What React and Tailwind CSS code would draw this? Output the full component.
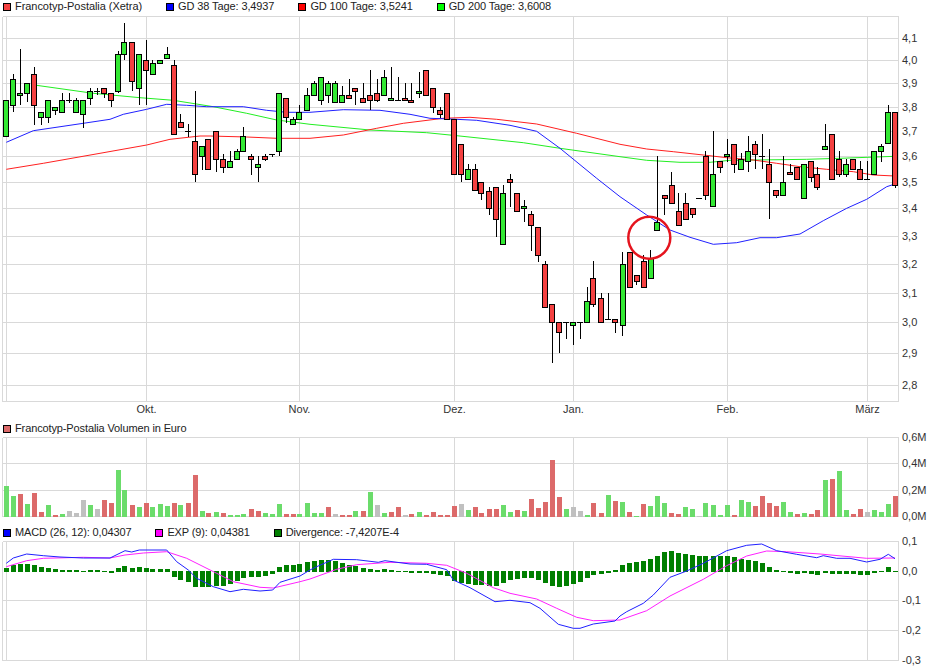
const G = "g", R = "r";
// candle readings: centre x, wick top, wick bottom, body top, body bottom, colour
const segA = [
  [19,301,409,301,409,G],[40,223,337,238,316,G],[61,148,315,280,286,G],[82,250,305,250,280,G],[103,202,374,223,316,R],
  [124,337,374,337,352,G],[145,301,368,301,352,G],[166,322,345,322,331,G],[187,280,337,301,337,G],[208,280,308,301,301,G],
  [229,295,337,301,337,G],[250,301,383,301,343,G],[271,265,316,274,295,G],[292,265,286,274,274,G],[313,265,295,265,280,R],
  [334,280,322,280,301,R],[355,154,280,163,274,G],[373,70,181,127,163,G],[397,127,274,127,244,R],[418,163,316,163,265,G],
  [439,121,316,181,211,R],[458,181,223,190,223,G],[481,181,190,181,190,G],[502,142,175,163,175,G],[523,181,403,196,403,R],
  [542,343,383,367,382,R],[565,373,412,394,394,G],[586,274,547,424,523,R],[607,439,510,439,469,G],[625,418,508,418,508,R],
  [649,394,517,394,478,R],[670,461,518,478,502,R],[691,453,502,484,502,G],[712,447,478,454,478,G],[730,382,454,409,454,G],
  [754,463,524,469,478,R],[775,469,547,493,502,G],[796,463,484,469,478,R],[817,463,470,463,463,G],[838,280,469,280,454,G],
  [859,295,368,295,352,R],[880,352,373,358,373,G],[898,316,358,337,358,G],[922,265,331,286,331,G],
];
const segB = [
  [13,244,286,250,286,G],[34,232,316,232,301,G],[55,244,310,250,286,G],[76,244,307,250,307,G],[97,259,307,286,307,G],
  [118,238,295,286,295,R],[136,265,316,265,274,R],[160,250,307,295,307,R],[181,211,331,286,301,R],[202,238,307,280,301,R],
  [223,211,286,232,286,G],[244,202,301,295,301,G],[265,232,301,301,301,G],[286,250,301,295,301,R],[304,250,307,301,307,R],
  [328,217,295,274,280,G],[349,211,286,211,286,R],[370,265,338,265,322,R],[391,322,355,331,343,R],[412,280,358,280,358,R],
  [433,358,523,358,523,R],[454,433,547,433,523,R],[475,492,538,508,538,G],[496,492,571,508,571,R],[514,547,601,547,580,R],
  [538,562,645,572,625,R],[559,562,710,562,658,R],[580,555,733,580,733,G],[601,522,620,538,547,R],[622,580,634,580,634,R],
  [643,601,667,619,625,G],[664,634,752,643,676,R],[685,682,785,682,766,R],[706,784,922,793,922,R],[727,913,1090,913,967,R],
  [748,967,1060,967,997,R],[769,967,1016,967,967,G],[790,967,1034,967,976,G],[811,967,1016,967,967,G],[832,862,967,904,967,G],
  [850,784,922,835,913,R],[874,880,967,895,967,R],[895,880,958,958,958,G],[916,958,998,958,967,R],
];
const segC = [
  [8,367,617,403,586,G],[29,367,472,367,472,R],[50,436,465,436,454,R],[71,375,472,394,472,R],[92,361,445,385,445,G],
  [112,78,301,277,301,G],[134,196,256,196,205,R],[155,127,220,166,220,R],[176,190,286,244,286,R],[197,190,268,220,268,R],
  [218,235,265,235,253,R],[238,205,205,205,205,G],[257,64,211,79,196,R],[280,4,229,133,229,G],[301,94,128,94,112,R],
  [322,27,95,73,79,G],[343,43,128,43,103,R],[364,70,118,88,118,G],[385,18,127,64,94,G],[406,33,118,43,73,R],
  [427,13,118,79,79,G],[448,58,268,103,157,R],[469,181,205,181,196,R],[490,79,196,157,196,G],[511,103,133,127,133,R],
  [532,112,148,112,148,R],[553,103,205,103,205,G],[574,94,157,94,142,R],[592,112,181,133,172,R],[616,-17,58,49,58,G],
  [637,13,148,13,148,R],[658,64,142,88,133,R],[679,88,142,103,133,G],[700,88,118,88,118,R],[721,94,148,118,148,R],
  [742,94,148,148,148,G],[763,64,133,64,133,G],[784,43,95,49,64,G],[805,-74,40,-54,40,G],[826,-54,173,-54,165,R],
];
const conv = (s, ox, oy) => s.map(([x, a, b, c, d, k]) => ({ x: ox + x / 3, wt: oy + a / 3, wb: oy + b / 3, bt: oy + c / 3, bb: oy + d / 3, k }));
const candles = [...conv(segA, 0, 0), ...conv(segB, 310, 0), ...conv(segC, 620, 130)];

const volTops = [198,228,222,252,219,276,255,285,282,273,279,240,255,267,240,249,150,210,255,261,249,261,252,258,249,255,249,165,273,279,276,279,285,285,282,267,273,279,282,252,282,282,282,249,
  279,279,261,282,285,285,273,273,216,255,279,276,261,285,282,276,285,276,285,285,258,252,270,261,279,267,267,255,276,270,273,237,264,246,120,231,267,261,273,285,249,279,225,243,
  246,276,288,252,258,228,249,279,282,261,267,289,249,255,285,255,285,240,246,258,228,249,258,246,276,282,279,282,270,180,177,153,270,282,267,276,270,276,252,228];
const volColors =
  "ggrgrrgrgsssgsrrggrgrgggrgrrgrgrgggrrgggrrgg" +
  "ggrsrrgrgsgrrsrgrrrrrsgrrrrggrgrrrrrgssgrrgr" +
  "grgrgggrrggsggggrggrrrrggrgrrgrggrrsgggr";
const tones = { g: "#6bdc6b", r: "#dc6a6a", s: "#c0c0c0" };

const macdBars = [[144,156],[135,156],[132,156],[132,156],[135,156],[141,156],[144,156],[147,156],[150,156],[150,156],[150,156],[153,156],[150,156],[150,156],[153,156],[153,159],[144,156],[138,156],[144,156],[141,156],[144,156],[147,156],[147,156],[147,156],[153,171],[153,180],[153,186],[153,201],[153,201],[153,201],[153,198],[153,198],[153,192],[153,183],[153,174],[153,171],[153,171],[153,168],[153,162],[141,156],[135,156],[135,156],[132,156],[126,156],
  [123,156],[120,156],[120,156],[123,156],[129,156],[135,156],[138,156],[144,156],[147,156],[150,156],[147,156],[150,156],[153,156],[153,156],[153,159],[153,159],[153,159],[153,162],[153,165],[153,168],[153,183],[153,189],[153,192],[153,195],[153,195],[153,198],[153,198],[153,189],[153,180],[153,177],[153,174],[153,174],[153,180],[153,189],[153,198],[153,201],[153,198],[153,192],[153,186],[153,174],[153,165],[153,162],[153,159],[150,156],
  [135,156],[129,156],[126,156],[123,156],[117,156],[108,156],[96,156],[93,156],[99,156],[102,156],[105,156],[108,156],[108,156],[108,156],[108,156],[108,156],[111,156],[117,156],[120,156],[123,156],[129,156],[141,156],[150,156],[153,157],[153,159],[153,162],[153,159],[153,162],[153,165],[153,159],[153,162],[153,162],[153,162],[153,162],[153,165],[153,165],[153,159],[153,156],[141,156],[153,156]];

const line = (parts) => parts.flatMap(([ox, oy, p]) => p.map(([x, y]) => `${(ox + x / 3).toFixed(1)},${(oy + y / 3).toFixed(1)}`)).join(" ");

const blue = line([
  [0,0,[[19,427],[100,392],[250,370],[330,358],[370,343],[440,328],[500,313],[560,316],[620,320],[730,320],[800,331],[860,337]]],
  [310,0,[[0,337],[100,329],[210,331],[300,343],[360,355],[420,357],[500,361],[600,376],[680,394],[750,445],[860,535],[930,590]]],
  [620,130,[[80,255],[150,300],[210,322],[280,343],[350,338],[420,323],[470,323],[540,312],[610,272],[680,235],[740,208],[800,170],[825,162]]],
]);
const red = line([
  [0,0,[[19,508],[130,490],[300,460],[440,435],[510,418],[600,408],[630,408],[740,411],[830,415]]],
  [310,0,[[0,415],[100,405],[200,385],[280,370],[400,355],[480,352],[560,358],[680,372],[800,400],[930,433]]],
  [620,0,[[80,447],[160,455],[250,465],[320,473],[400,480],[470,490],[540,500],[620,508],[700,515],[760,525],[825,528]]],
]);
const green = line([
  [0,0,[[103,255],[280,280],[420,293],[520,301],[640,320],[740,340],[830,360]]],
  [310,0,[[0,373],[180,390],[350,398],[440,407],[640,428],[750,445],[930,470]]],
  [620,0,[[80,481],[180,487],[270,487],[330,481],[480,479],[560,478],[660,475],[825,469]]],
]);
const macdBlue = line([
  [0,520,[[19,130],[40,114],[80,102],[130,107],[180,111],[250,114],[330,114],[375,92],[395,96],[418,90],[500,90],[530,125],[565,150],[590,175],[640,200],[690,215],[730,208],[780,213],[818,210],[840,187],[900,168]]],
  [310,520,[[0,150],[20,140],[70,118],[140,119],[205,127],[225,122],[300,132],[350,133],[410,149],[430,180],[480,203],[555,245],[600,241],[660,248],[690,265],[745,313],[790,325],[810,325],[850,312],[915,303]]],
  [620,520,[[0,288],[20,275],[70,250],[100,225],[150,172],[200,153],[250,130],[320,92],[380,76],[425,72],[470,92],[530,103],[590,113],[610,107],[650,115],[690,115],[740,126],[780,118],[805,103],[825,116]]],
]);
const macdPink = line([
  [0,520,[[19,140],[80,122],[130,115],[250,112],[330,114],[375,105],[430,99],[500,95],[560,115],[650,160],[700,185],[780,202],[820,204],[900,185]]],
  [310,520,[[0,177],[80,148],[140,134],[240,127],[350,130],[410,136],[470,160],[550,203],[600,220],[680,237],[740,265],[800,292],[850,302]]],
  [620,520,[[0,300],[80,272],[150,228],[250,178],[320,137],[380,108],[440,93],[500,95],[600,102],[740,115],[825,114]]],
]);

const vGrid = [6.5, 146.5, 299.5, 454.5, 573.5, 727.5, 867.5];
const grid = "#d9d9d9";

function Frame({ top, bottom, rows }) {
  return (
    <g stroke={grid} strokeWidth="1" shapeRendering="crispEdges">
      {rows.map((y) => <line key={y} x1="2.5" x2="898.5" y1={y} y2={y} />)}
      {[2.5, ...vGrid, 898.5].map((x) => <line key={x} x1={x} x2={x} y1={top} y2={bottom} />)}
    </g>
  );
}

function Labels({ items }) {
  return items.map(([t, y]) => (
    <text key={t} x="902" y={y} dominantBaseline="central" fontSize="11" fill="#333333">{t}</text>
  ));
}

function Legend({ items, className }) {
  return (
    <div className={`flex items-center gap-[24px] pl-[3px] text-[11px] text-[#222222] ${className}`}>
      {items.map(([t, c, track]) => (
        <div key={t} className="flex items-center gap-[4px] whitespace-nowrap">
          <span className="block w-[8px] h-[8px] border border-black" style={{ backgroundColor: c }} />
          <span className={track}>{t}</span>
        </div>
      ))}
    </div>
  );
}

function Candle({ c }) {
  const cx = Math.round(c.x - 0.5) + 0.5;
  const left = Math.round(c.x - 3) + 0.5;
  const fill = c.k === "g" ? "#33e833" : "#f44141";
  const doji = c.bb - c.bt < 1;
  const bt = Math.round(c.bt) + 0.5, bb = Math.round(c.bb) + 0.5;
  return (
    <g shapeRendering="crispEdges">
      <line x1={cx} x2={cx} y1={c.wt} y2={c.wb} stroke="#000" strokeWidth="1" />
      {doji
        ? <line x1={left - 0.5} x2={left + 5.5} y1={bt} y2={bt} stroke="#000" strokeWidth="1" />
        : <rect x={left} y={bt} width="5" height={bb - bt} fill={fill} stroke="#000" strokeWidth="1" />}
    </g>
  );
}

export default function App() {
  return (
    <div className="w-[940px] h-[670px] bg-white overflow-hidden font-['Liberation_Sans',Arial,sans-serif]">
      <section>
        <Legend className="h-[13px]" items={[
          ["Francotyp-Postalia (Xetra)", "#f44141", "tracking-[-0.05px]"],
          ["GD 38 Tage: 3,4937", "#0000ff", "tracking-[-0.11px]"],
          ["GD 100 Tage: 3,5241", "#ff0000", "tracking-[-0.11px]"],
          ["GD 200 Tage: 3,6008", "#00ff00", "tracking-[-0.11px]"],
        ]} />
        <svg className="block w-[940px] h-[408px] overflow-visible" viewBox="0 13 940 408">
          <Frame top={16.5} bottom={401.5} rows={[16.5, 38.5, 60.5, 83.5, 107.5, 131.5, 156.5, 182.5, 208.5, 236.5, 264.5, 293.5, 322.5, 353.5, 385.5, 401.5]} />
          <polyline points={green} fill="none" stroke="#22ee22" strokeWidth="1" />
          <polyline points={red} fill="none" stroke="#ff2020" strokeWidth="1" />
          <polyline points={blue} fill="none" stroke="#2020ff" strokeWidth="1" />
          {candles.map((c, i) => <Candle key={i} c={c} />)}
          <circle cx="649.3" cy="237.7" r="21" fill="none" stroke="#e5141e" strokeWidth="2.5" />
          <Labels items={[["4,1",38],["4,0",60],["3,9",83],["3,8",107],["3,7",131],["3,6",156],["3,5",182],["3,4",208],["3,3",236],["3,2",264],["3,1",293],["3,0",322],["2,9",353],["2,8",385]]} />
          {[["Okt.",146.5],["Nov.",299.5],["Dez.",454.5],["Jan.",573.5],["Feb.",727.5],["März",867.5]].map(([t, x]) => (
            <text key={t} x={x} y="409" textAnchor="middle" dominantBaseline="central" fontSize="11" fill="#333333">{t}</text>
          ))}
        </svg>
      </section>
      <section>
        <Legend className="h-[15px]" items={[["Francotyp-Postalia Volumen in Euro", "#dc6a6a", "tracking-[-0.12px]"]]} />
        <svg className="block w-[940px] h-[89px] overflow-visible" viewBox="0 436 940 89">
          <Frame top={437.5} bottom={516.5} rows={[437.5, 463.5, 490.5, 516.5]} />
          {candles.map((c, i) => {
            const y = 420 + volTops[i] / 3;
            return <rect key={i} x={Math.round(c.x - 2.33)} y={y} width="5" height={517 - y} fill={tones[volColors[i]] || tones.g} />;
          })}
          <Labels items={[["0,6M",437],["0,4M",463],["0,2M",490],["0,0M",516]]} />
        </svg>
      </section>
      <section>
        <Legend className="h-[15px]" items={[
          ["MACD (26, 12): 0,04307", "#0000ff", "tracking-[-0.13px]"],
          ["EXP (9): 0,04381", "#ff00ff", "tracking-[-0.12px]"],
          ["Divergence: -7,4207E-4", "#007f00", "tracking-[-0.13px]"],
        ]} />
        <svg className="block w-[940px] h-[130px] overflow-visible" viewBox="0 540 940 130">
          <Frame top={541.5} bottom={660.5} rows={[541.5, 600.5, 630.5, 660.5]} />
          {candles.map((c, i) => {
            const [a, b] = macdBars[i];
            return <rect key={i} x={Math.round(c.x - 2.33)} y={Math.round(520 + a / 3)} width="5" height={Math.max(1, Math.round((b - a) / 3))} fill="#007f00" />;
          })}
          <polyline points={macdPink} fill="none" stroke="#ff20ff" strokeWidth="1" />
          <polyline points={macdBlue} fill="none" stroke="#2020ff" strokeWidth="1" />
          <Labels items={[["0,1",541],["0,0",571],["-0,1",600],["-0,2",630],["-0,3",660]]} />
        </svg>
      </section>
    </div>
  );
}
